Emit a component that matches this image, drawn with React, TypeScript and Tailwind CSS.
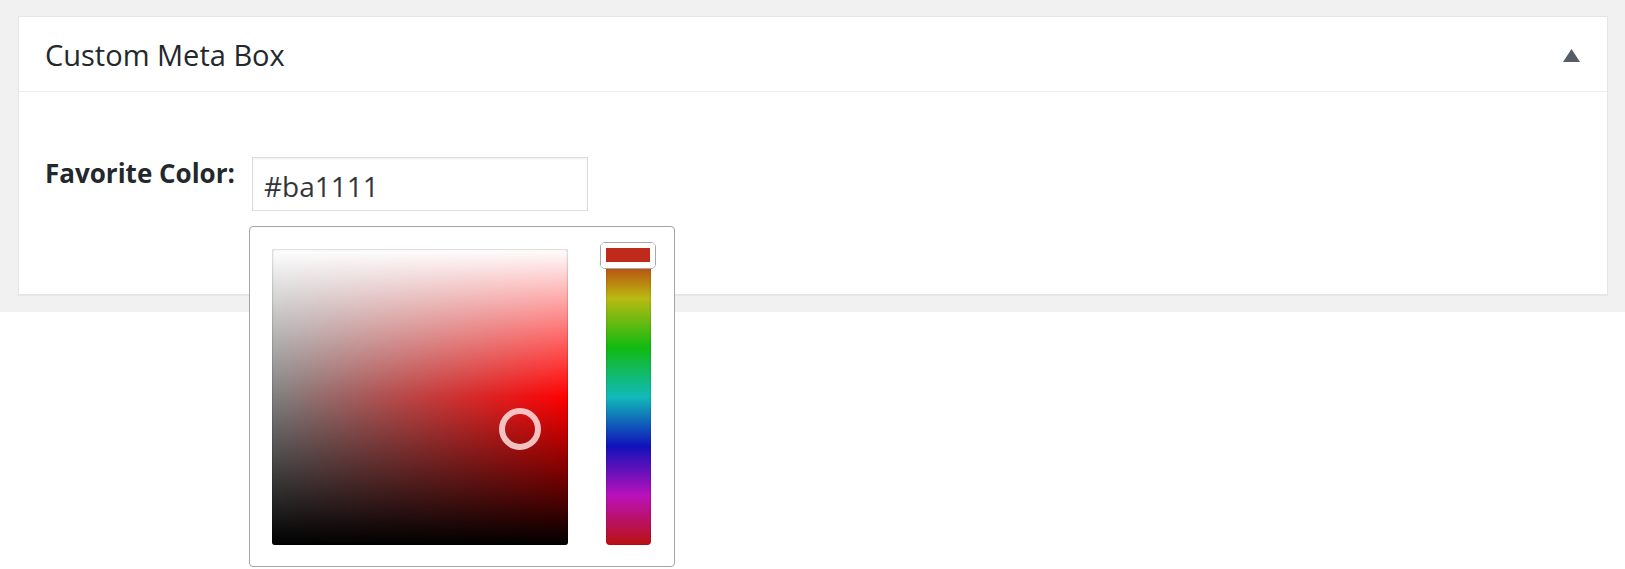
import React from "react";

export default function App() {
  return (
    <div className="min-h-[569px] w-full bg-white" style={{ fontFamily: '"Open Sans", "Noto Sans", Arial, sans-serif' }}>
      <div className="bg-[#f1f1f1] pt-4 pl-[18px] pr-[17px] pb-[17px]">
        <div className="bg-white border border-[#e5e5e5] shadow-[0_1px_1px_rgba(0,0,0,0.04)]">
          <div className="h-[75px] border-b border-[#eeeeee] flex items-center justify-between pl-[26px] pr-[27px]">
            <h2 className="text-[29px] leading-none text-[#23282d] font-normal">Custom Meta Box</h2>
            <svg width="17" height="13" viewBox="0 0 17 13" className="mt-[3px]">
              <polygon points="8.5,0 17,13 0,13" fill="#555d66" />
            </svg>
          </div>
          <div className="h-[202px] pl-[26px] pt-[65px] flex items-start">
            <label className="text-[26px] font-bold text-[#23282d] leading-none mt-[3px] w-[207px]">Favorite Color:</label>
            <div className="relative">
              <div className="w-[336px] h-[54px] border border-[#dddddd] shadow-[inset_0_1px_2px_rgba(0,0,0,0.07)] bg-white flex items-center pl-[11px]">
                <span className="text-[28px] text-[#32373c] leading-none mt-[4px]">#ba1111</span>
              </div>
              <div className="absolute top-[69px] left-[-3px] w-[426px] h-[341px] bg-white border border-[#a4a4a4] rounded-[4px] flex items-start pt-[22px] pl-[22px]">
                <div
                  className="relative w-[296px] h-[296px] rounded-[3px]"
                  style={{
                    background:
                      "linear-gradient(to bottom, #ffffff 0%, rgba(255,255,255,0) 50%, rgba(0,0,0,0) 50%, #000000 100%), linear-gradient(to right, #808080, #ff0000)",
                  }}
                >
                  <div className="absolute inset-0 rounded-[3px] shadow-[inset_0_0_2px_rgba(0,0,0,0.45)]" />
                  <div className="absolute left-[227px] top-[159px] w-[42px] h-[42px] rounded-full border-[6px] border-[rgba(255,225,225,0.85)]" />
                </div>
                <div className="relative ml-[38px] w-[45px] h-[296px]">
                  <div
                    className="w-full h-full rounded-[4px] shadow-[inset_0_0_2px_rgba(0,0,0,0.3)]"
                    style={{
                      background:
                        "linear-gradient(to bottom, #ba1111 0%, #baba11 16.67%, #11ba11 33.33%, #11baba 50%, #1111ba 66.67%, #ba11ba 83.33%, #ba1111 100%)",
                    }}
                  />
                  <div className="absolute left-[-6px] right-[-5px] top-[-7px] h-[27px] rounded-[5px] border border-[#a8a8a8]">
                    <div className="w-full h-full rounded-[4px] border-[5px] border-b-[6px] border-white bg-[#c02a1a]" />
                  </div>
                </div>
              </div>
            </div>
          </div>
        </div>
      </div>
    </div>
  );
}
